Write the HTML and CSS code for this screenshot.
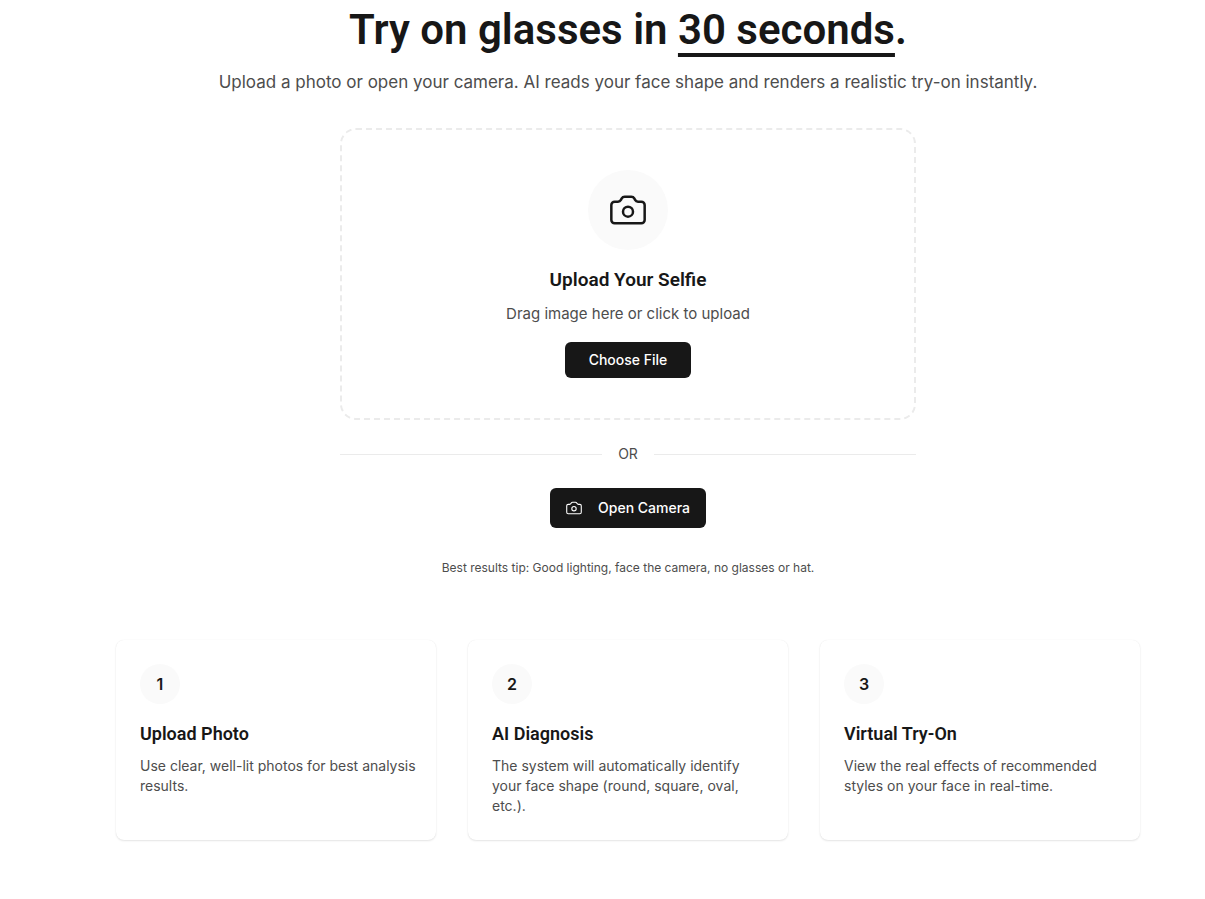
FILE: index.html
```
<!DOCTYPE html>
<html lang="en">
<head>
    <meta charset="UTF-8">
    <meta name="viewport" content="width=device-width, initial-scale=1.0">
    <title>Try on glasses</title>
    <link rel="stylesheet" href="styles.css">
</head>
<body>
    <main class="page">
        <header class="hero">
            <h1>Try on glasses in <span class="underlined">30 seconds</span>.</h1>
            <p>Upload a photo or open your camera. AI reads your face shape and renders a realistic try-on instantly.</p>
        </header>

        <section class="uploader">
            <div class="dropzone">
                <div class="dropzone-icon">
                    <svg width="40" height="40" viewBox="0 0 24 24" fill="none" stroke="currentColor" stroke-width="1.5" stroke-linecap="round" stroke-linejoin="round" aria-hidden="true">
                        <path d="M14 4a2 2 0 0 1 1.760 1.050l.486.900A2 2 0 0 0 18 7h2a2 2 0 0 1 2 2v9a2 2 0 0 1-2 2H4a2 2 0 0 1-2-2V9a2 2 0 0 1 2-2h2a2 2 0 0 0 1.760-1.050l.486-.900A2 2 0 0 1 10 4z"/>
                        <circle cx="12" cy="13" r="3"/>
                    </svg>
                </div>
                <h2>Upload Your Selfie</h2>
                <p>Drag image here or click to upload</p>
                <button type="button" class="btn btn-small">Choose File</button>
            </div>

            <div class="divider">OR</div>

            <button type="button" class="btn btn-camera">
                <svg width="16" height="16" viewBox="1 1 22 22" fill="none" stroke="currentColor" stroke-width="1.5" stroke-linecap="round" stroke-linejoin="round" aria-hidden="true">
                    <path d="M14 4a2 2 0 0 1 1.760 1.050l.486.900A2 2 0 0 0 18 7h2a2 2 0 0 1 2 2v9a2 2 0 0 1-2 2H4a2 2 0 0 1-2-2V9a2 2 0 0 1 2-2h2a2 2 0 0 0 1.760-1.050l.486-.900A2 2 0 0 1 10 4z"/>
                    <circle cx="12" cy="13" r="3"/>
                </svg>
                Open Camera
            </button>
            <p class="tip">Best results tip: Good lighting, face the camera, no glasses or hat.</p>
        </section>

        <section class="steps">
            <article class="card">
                <div class="number">1</div>
                <h3>Upload Photo</h3>
                <p>Use clear, well-lit photos for best analysis results.</p>
            </article>
            <article class="card">
                <div class="number">2</div>
                <h3>AI Diagnosis</h3>
                <p>The system will automatically identify your face shape (round, square, oval, etc.).</p>
            </article>
            <article class="card">
                <div class="number">3</div>
                <h3>Virtual Try-On</h3>
                <p>View the real effects of recommended styles on your face in real-time.</p>
            </article>
        </section>
    </main>
</body>
</html>
```

FILE: styles.css
```
*{box-sizing: border-box;}
body{
    margin: 0;
    background: #fff;
    color: #171717;
    font: 16px/24px "Inter", "Liberation Sans", sans-serif;
}
h1, h2, h3, p{margin: 0;}
h1, h2, h3{font-family: "Roboto", "Inter", sans-serif; font-weight: 600;}

.page{
    max-width: 1205px;
    margin: 0 auto;
    padding: 4px 65px 56px 116px;
}

/* hero */
.hero{text-align: center;}
.hero h1{font-size: 42px; line-height: 52px;}
.hero p{
    margin-top: 12px;
    color: #4d4d4d;
    font-size: 17px;
    line-height: 28px;
}
.underlined{
    text-decoration: underline;
    text-decoration-thickness: 4px;
    text-underline-offset: 9px;
    text-decoration-skip-ink: none;
}

/* upload */
.uploader{
    display: flex;
    flex-direction: column;
    align-items: center;
    max-width: 576px;
    margin: 32px auto 0;
}
.dropzone{
    display: flex;
    flex-direction: column;
    align-items: center;
    width: 100%;
    padding: 40px;
    border: 2px dashed #ebebeb;
    border-radius: 16px;
}
.dropzone-icon{
    display: flex;
    align-items: center;
    justify-content: center;
    width: 80px;
    height: 80px;
    margin-bottom: 16px;
    border-radius: 50%;
    background: #fafafa;
}
.dropzone h2{font-size: 19px; line-height: 28px;}
.dropzone p{margin: 8px 0 16px; color: #4d4d4d; font-size: 15px;}

.btn{
    display: flex;
    align-items: center;
    border: 0;
    border-radius: 6px;
    background: #171717;
    color: #fff;
    font: 500 14px/20px "Inter", "Liberation Sans", sans-serif;
    cursor: pointer;
}
.btn-small{padding: 8px 24px;}
.btn-camera{gap: 16px; padding: 10px 16px;}

.divider{
    display: flex;
    align-items: center;
    gap: 16px;
    width: 100%;
    margin: 24px 0;
    color: #4d4d4d;
    font-size: 14px;
    line-height: 20px;
}
.divider::before, .divider::after{
    content: "";
    flex: 1;
    height: 1px;
    background: #ebebeb;
}
.tip{
    margin-top: 32px;
    color: #4d4d4d;
    font-size: 12px;
    line-height: 16px;
}

/* steps */
.steps{
    display: grid;
    grid-template-columns: repeat(3, 1fr);
    gap: 32px;
    margin-top: 64px;
}
.card{
    padding: 24px 16px 24px 24px;
    border-radius: 8px;
    background: #fff;
    box-shadow: 0 0 1px rgba(0,0,0,.08), 0 1px 2px rgba(0,0,0,.1);
}
.number{
    width: 40px;
    height: 40px;
    border-radius: 50%;
    background: #fafafa;
    font-weight: 600;
    line-height: 40px;
    text-align: center;
}
.card h3{margin-top: 16px; font-size: 18px; line-height: 28px;}
.card p{
    margin-top: 8px;
    color: #4d4d4d;
    font-size: 14px;
    line-height: 20px;
}

@media (max-width: 760px){
    .page{padding: 16px;}
    .steps{grid-template-columns: 1fr;}
}
```
